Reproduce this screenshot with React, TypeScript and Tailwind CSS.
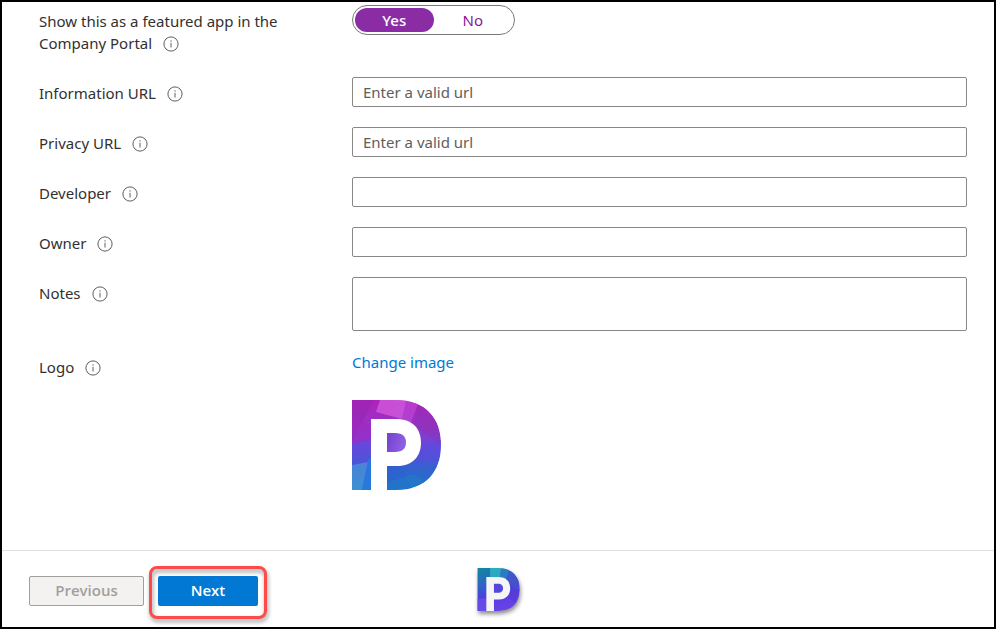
import { ReactNode, useId, useState } from "react";

function InfoIcon() {
  return (
    <svg viewBox="0 0 16 16" className="inline-block size-4 shrink-0" fill="none" aria-hidden="true">
      <circle cx="8" cy="8" r="7.1" stroke="#605e5c" strokeWidth="1" />
      <path d="M8 6.8v4.7" stroke="#605e5c" strokeWidth="1" />
      <circle cx="8" cy="4.9" r="0.7" fill="#605e5c" />
    </svg>
  );
}

const LABEL = "pt-[5px] pr-6 pb-[3px] leading-[22px]";
const INPUT =
  "block h-[30px] w-full rounded-xs border border-[#8a8886] bg-white px-2.5 pb-px placeholder:text-[#605e5c] placeholder:opacity-100";

function Row({ label, htmlFor, children }: { label: string; htmlFor?: string; children: ReactNode }) {
  const content = (
    <>
      <span className="mr-[11px]">{label}</span>
      <span className="inline-flex h-[22px] items-end pb-[2px] align-top">
        <InfoIcon />
      </span>
    </>
  );
  return (
    <div className="grid grid-cols-[313px_minmax(0,1fr)]">
      {htmlFor ? (
        <label htmlFor={htmlFor} className={LABEL}>
          {content}
        </label>
      ) : (
        <div className={LABEL}>{content}</div>
      )}
      <div>{children}</div>
    </div>
  );
}

function TextRow({ label, placeholder }: { label: string; placeholder?: string }) {
  const id = useId();
  return (
    <Row label={label} htmlFor={id}>
      <input id={id} type="text" placeholder={placeholder} className={INPUT} />
    </Row>
  );
}

function FeaturedToggle() {
  const [value, setValue] = useState("Yes");
  return (
    <div
      role="radiogroup"
      aria-label="Show this as a featured app in the Company Portal"
      className="flex h-[30px] w-[163px] rounded-full border border-[#7a7876] p-[2px]"
    >
      {["Yes", "No"].map((option) => (
        <label
          key={option}
          className="relative flex h-6 flex-1 cursor-pointer items-center justify-center rounded-full leading-6 text-[#881798] has-checked:bg-[#8a2da5] has-checked:font-medium has-checked:text-white"
        >
          <input
            type="radio"
            name="featured"
            checked={value === option}
            onChange={() => setValue(option)}
            className="sr-only"
          />
          {option}
        </label>
      ))}
    </div>
  );
}

const D_SHAPE = "M0 0H44C74 0 89 18 89 45S74 90 44 90H0Z";
const P_SHAPE = "M19 19H44C61 19 69 29 69 42.500S61 66 45 66H35V90H19Z";
const COUNTER = "M35 33H43C51 33 54 37 54 42.500S51 52 43 52H35Z";

function AppLogo() {
  return (
    <svg viewBox="0 0 89 90" className="h-[90px] w-[89px]" role="img" aria-label="App logo">
      <defs>
        <linearGradient id="logo-base" x1="0" y1="0" x2="0" y2="1">
          <stop offset="0" stopColor="#b022bc" />
          <stop offset="0.3" stopColor="#9434c6" />
          <stop offset="0.5" stopColor="#6a48d8" />
          <stop offset="0.75" stopColor="#3560cf" />
          <stop offset="1" stopColor="#1c78c4" />
        </linearGradient>
        <linearGradient id="logo-counter" x1="0" y1="0" x2="1" y2="0.3">
          <stop offset="0" stopColor="#7440cc" />
          <stop offset="1" stopColor="#8f60e4" />
        </linearGradient>
        <clipPath id="logo-d">
          <path d={D_SHAPE} />
        </clipPath>
      </defs>
      <g clipPath="url(#logo-d)">
        <path d={D_SHAPE} fill="url(#logo-base)" />
        <path d="M0 0H22L10 22L0 42Z" fill="#8f22a6" opacity="0.4" />
        <path d="M0 14L19 27V40L0 44Z" fill="#a524c4" opacity="0.5" />
        <path d="M28 0H54L50 19L24 12Z" fill="#dc62e2" opacity="0.65" />
        <path d="M54 0L66 4L58 25L50 19L36 0Z" fill="#c452dc" opacity="0.5" />
        <path d="M66 4L89 26V44L62 27Z" fill="#8a30ac" opacity="0.35" />
        <path d="M69 44L89 40V60L64 62Z" fill="#5a48e0" opacity="0.4" />
        <path d="M0 44L19 39V66L0 66Z" fill="#5f4ce0" opacity="0.4" />
        <path d="M0 65L16 62L10 90H0Z" fill="#58a4dc" opacity="0.55" />
        <path d="M16 60L19 58V90H10Z" fill="#2a7be0" opacity="0.8" />
        <path d="M35 66H50L60 90H35Z" fill="#2b60cf" opacity="0.5" />
        <path d="M35 82L62 74L72 82L50 90H35Z" fill="#1a8ccb" opacity="0.3" />
      </g>
      <path d={P_SHAPE} fill="white" />
      <path d={COUNTER} fill="url(#logo-counter)" />
    </svg>
  );
}

function BrandMark() {
  return (
    <svg
      viewBox="0 0 89 90"
      className="h-[43px] w-[43px] overflow-visible drop-shadow-[1px_3px_2px_rgba(0,0,0,0.45)]"
      role="img"
      aria-label="Brand mark"
    >
      <defs>
        <linearGradient id="mark-base" x1="0" y1="0" x2="0.35" y2="1">
          <stop offset="0" stopColor="#108a98" />
          <stop offset="0.35" stopColor="#2a68c4" />
          <stop offset="0.65" stopColor="#4c40dc" />
          <stop offset="1" stopColor="#6840e8" />
        </linearGradient>
        <clipPath id="mark-d">
          <path d={D_SHAPE} />
        </clipPath>
      </defs>
      <g clipPath="url(#mark-d)">
        <path d={D_SHAPE} fill="url(#mark-base)" />
        <path d="M27 0H50L48 19H27Z" fill="#30b6c4" opacity="0.8" />
        <path d="M50 0H68L60 24L48 19Z" fill="#2c80c4" opacity="0.8" />
        <path d="M68 4L89 26V50L60 28Z" fill="#4653ca" opacity="0.8" />
        <path d="M69 48L89 44L80 74L64 60Z" fill="#5a38d4" opacity="0.7" />
        <path d="M0 64H19V90H0Z" fill="#6c50ea" opacity="0.7" />
      </g>
      <path d={P_SHAPE} fill="#f5f5f5" />
      <path d={COUNTER} fill="#5347dc" />
    </svg>
  );
}

export default function App() {
  const notesId = useId();
  return (
    <div className="flex min-h-screen flex-col border-2 border-black bg-white font-['Noto_Sans','Open_Sans',sans-serif] text-[15px] text-[#323130]">
      <main className="flex-1 pt-[3px] pr-[27px] pb-8 pl-[37px]">
        <form className="flex flex-col gap-5">
          <Row label="Show this as a featured app in the Company Portal">
            <FeaturedToggle />
          </Row>
          <TextRow label="Information URL" placeholder="Enter a valid url" />
          <TextRow label="Privacy URL" placeholder="Enter a valid url" />
          <TextRow label="Developer" />
          <TextRow label="Owner" />
          <Row label="Notes" htmlFor={notesId}>
            <textarea
              id={notesId}
              className="block h-[54px] w-full resize-none rounded-xs border border-[#8a8886] bg-white px-2.5 py-1"
            />
          </Row>
          <Row label="Logo">
            <div className="flex flex-col items-start gap-[27px]">
              <a href="#logo" className="leading-[22px] text-[#0078d4]">
                Change image
              </a>
              <AppLogo />
            </div>
          </Row>
        </form>
      </main>
      <footer className="grid h-[77px] grid-cols-[1fr_auto_1fr] items-start border-t border-[#e1dfdd] px-[27px]">
        <div className="flex gap-[14px] pt-[25px] font-['Open_Sans','Noto_Sans',sans-serif] font-semibold">
          <button
            type="button"
            disabled
            className="h-[30px] w-[115px] rounded-xs border border-[#a19f9d] bg-[#f3f2f1] pb-px text-[#a19f9d]"
          >
            Previous
          </button>
          <div className="relative">
            <button type="button" className="h-[30px] w-[100px] rounded-xs bg-[#0078d4] pb-px text-white">
              Next
            </button>
            <div className="pointer-events-none absolute -inset-x-[9px] -top-[10px] -bottom-[13px] rounded-lg border-3 border-[#ff4a4a] drop-shadow-[1px_3px_2px_rgba(0,0,0,0.4)]" />
          </div>
        </div>
        <div className="pt-[17px]">
          <BrandMark />
        </div>
      </footer>
    </div>
  );
}
